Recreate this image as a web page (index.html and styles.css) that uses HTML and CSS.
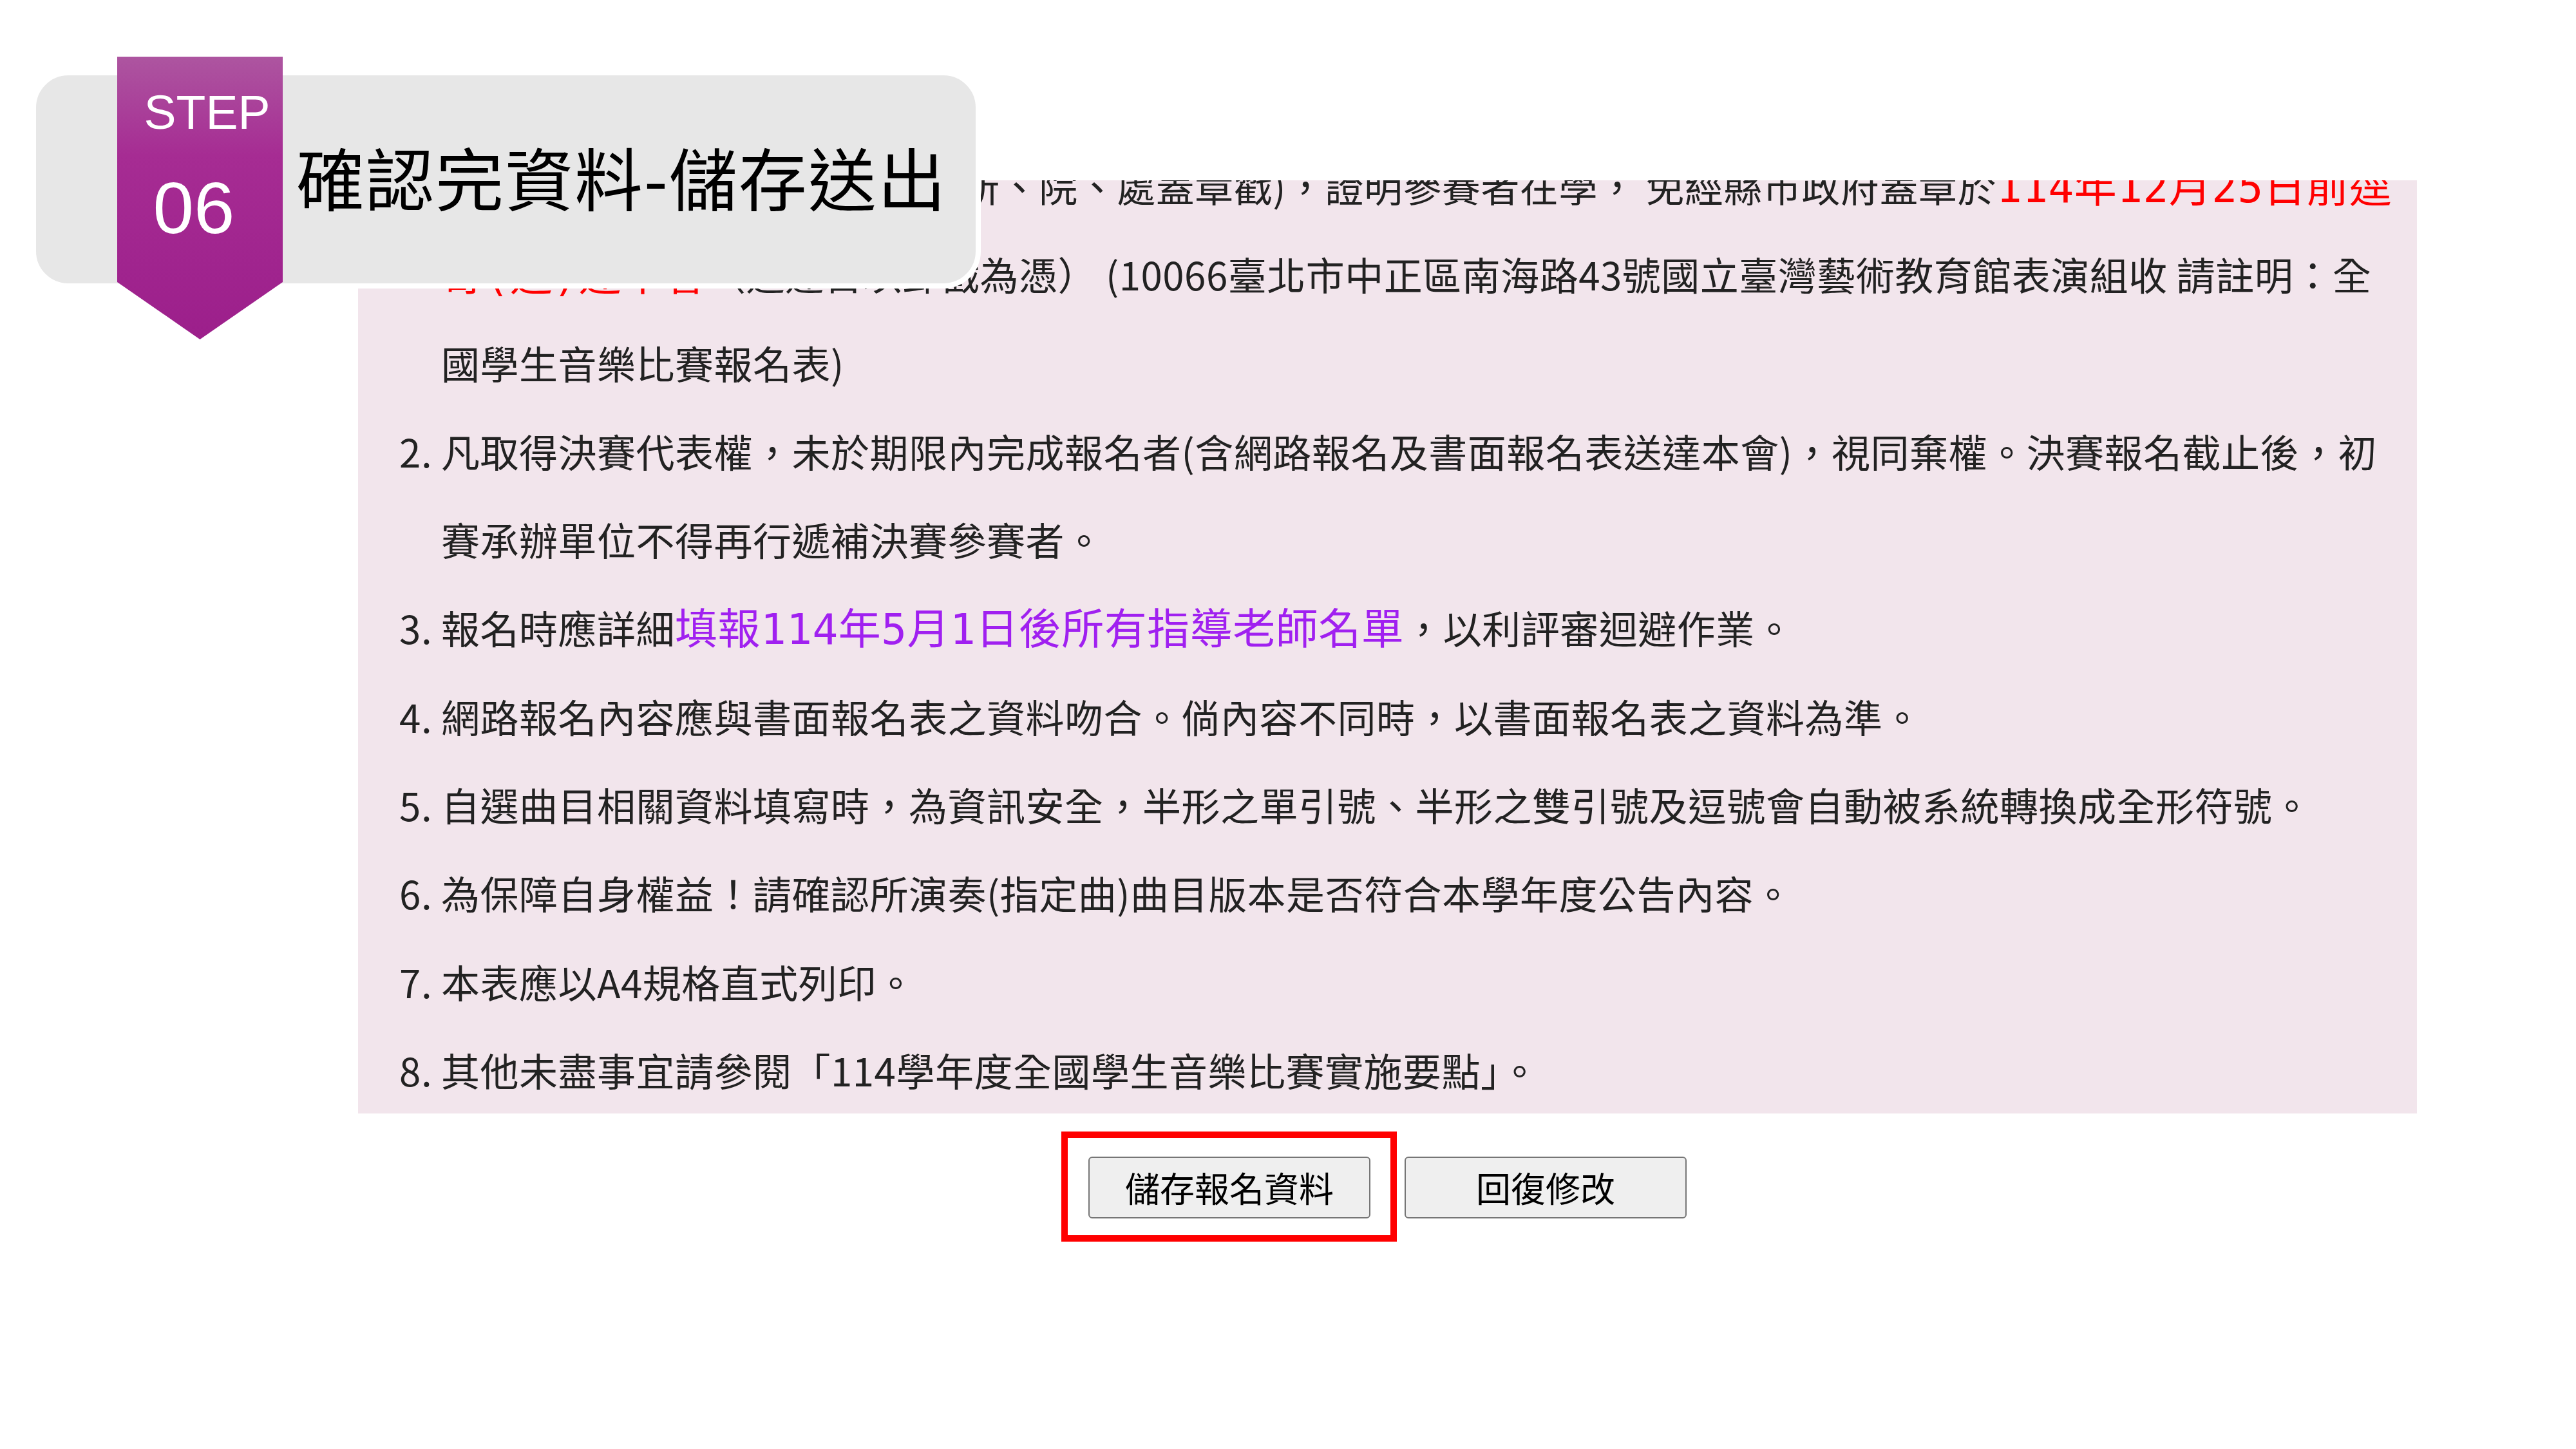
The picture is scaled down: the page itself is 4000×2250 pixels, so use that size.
FILE: index.html
```html
<!DOCTYPE html>
<html lang="zh-Hant">
<head>
    <meta charset="UTF-8">
    <title>STEP 06 確認完資料-儲存送出</title>
    <link rel="stylesheet" href="styles.css">
</head>
<body>
    <div class="page">
        <div class="step-title">
            <h1>確認完資料-儲存送出</h1>
        </div>
        <div class="ribbon">
            <div class="step-label">STEP</div>
            <div class="step-no">06</div>
        </div>

        <div class="sheet">
            <div class="notice">
                <ol>
                    <li>書面報名表須經就讀學校(系、所、院、處蓋章戳)，證明參賽者在學， 免經縣市政府蓋章於<span class="hl red">114年12月25日前逕</span><br><span class="hl red">寄(送)達本會</span>（送達日以郵戳為憑） (10066臺北市中正區南海路43號國立臺灣藝術教育館表演組收 請註明：全<br>國學生音樂比賽報名表)</li>
                    <li>凡取得決賽代表權，未於期限內完成報名者(含網路報名及書面報名表送達本會)，視同棄權。決賽報名截止後，初<br>賽承辦單位不得再行遞補決賽參賽者。</li>
                    <li>報名時應詳細<span class="hl violet">填報114年5月1日後所有指導老師名單</span>，以利評審迴避作業。</li>
                    <li>網路報名內容應與書面報名表之資料吻合。倘內容不同時，以書面報名表之資料為準。</li>
                    <li>自選曲目相關資料填寫時，為資訊安全，半形之單引號、半形之雙引號及逗號會自動被系統轉換成全形符號。</li>
                    <li>為保障自身權益！請確認所演奏(指定曲)曲目版本是否符合本學年度公告內容。</li>
                    <li>本表應以A4規格直式列印。</li>
                    <li>其他未盡事宜請參閱「114學年度全國學生音樂比賽實施要點」。</li>
                </ol>
            </div>

            <div class="actions">
                <span class="marked">
                    <button type="button">儲存報名資料</button>
                </span>
                <button type="button">回復修改</button>
            </div>
        </div>
    </div>
</body>
</html>
```

FILE: styles.css
```css
body {
    margin: 0;
    background: #fff;
    font-family: "Noto Sans CJK TC", "Noto Sans", sans-serif;
    color: #222;
}

.page {
    position: relative;
    width: 4000px;
    height: 2250px;
    overflow: hidden;
}

/* header overlay */
.step-title {
    position: absolute;
    left: 48px;
    top: 109px;
    width: 1475px;
    height: 339px;
    box-sizing: border-box;
    border: 8px solid #fff;
    border-radius: 58px;
    background: #e7e7e7;
    display: flex;
    align-items: center;
    padding: 0 0 12px 404px;
    z-index: 2;
}

.step-title h1 {
    margin: 0;
    font-size: 106px;
    font-weight: 400;
    letter-spacing: 2px;
    line-height: 1;
    color: #000;
}

.ribbon {
    position: absolute;
    left: 182px;
    top: 88px;
    width: 257px;
    height: 439px;
    background: linear-gradient(#ad55a0 0%, #a62c93 35%, #9c1f8b 100%);
    clip-path: polygon(0 0, 100% 0, 100% 350px, 50% 100%, 0 350px);
    font-family: "Liberation Sans", Arial, sans-serif;
    color: #fff;
    text-align: center;
    z-index: 3;
}

.step-label {
    font-size: 75px;
    line-height: 75px;
    padding: 49px 0 0 22px;
}

.step-no {
    font-size: 114px;
    line-height: 114px;
    margin-top: 54px;
    padding-right: 19px;
}

/* content */
.sheet {
    margin-left: 556px;
    padding-top: 280px;
    width: 3197px;
}

.notice {
    background: #f2e5ec;
    overflow: hidden;
}

.notice ol {
    margin: -61px 0 0;
    padding: 0 0 0 129px;
    font-size: 60px;
    line-height: 137.3px;
    letter-spacing: 0.5px;
}

.hl {
    font-family: "DejaVu Sans Mono", "Noto Sans CJK TC", monospace;
    font-size: 66px;
    line-height: 1;
}

.red {
    color: #ff0000;
}

.violet {
    color: #a020f0;
}

.actions {
    display: flex;
    justify-content: center;
    gap: 53px;
    margin-top: 67px;
}

.actions button {
    width: 438px;
    height: 96px;
    background: #efefef;
    border: 2px solid #767676;
    border-radius: 6px;
    font-family: "Noto Sans CJK TC", sans-serif;
    font-size: 54px;
    color: #000;
    padding: 0;
    line-height: 1;
}

.marked {
    position: relative;
    display: block;
}

.marked::after {
    content: "";
    position: absolute;
    left: -42px;
    right: -41px;
    top: -39px;
    bottom: -36px;
    border: 10px solid #ff0000;
}
```
